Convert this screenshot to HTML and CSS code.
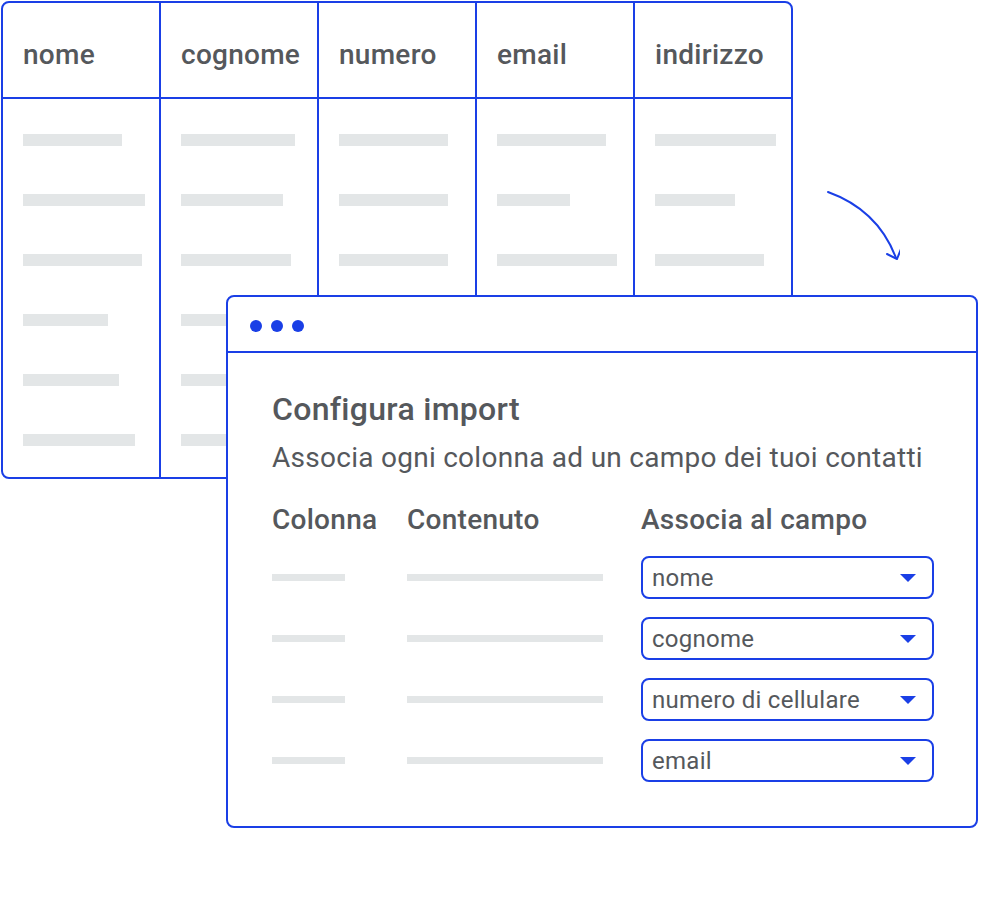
FILE: index.html
```html
<!DOCTYPE html>
<html lang="it">
<head>
<meta charset="utf-8">
<title>Configura import</title>
<link rel="stylesheet" href="styles.css">
</head>
<body>
<div class="canvas">
  <div class="sheet">
    <div class="col">
      <div class="col-head">nome</div>
      <div class="col-body">
        <span class="bar" style="width:99px"></span>
        <span class="bar" style="width:122px"></span>
        <span class="bar" style="width:119px"></span>
        <span class="bar" style="width:85px"></span>
        <span class="bar" style="width:96px"></span>
        <span class="bar" style="width:112px"></span>
      </div>
    </div>
    <div class="col">
      <div class="col-head">cognome</div>
      <div class="col-body">
        <span class="bar" style="width:114px"></span>
        <span class="bar" style="width:102px"></span>
        <span class="bar" style="width:110px"></span>
        <span class="bar" style="width:90px"></span>
        <span class="bar" style="width:100px"></span>
        <span class="bar" style="width:95px"></span>
      </div>
    </div>
    <div class="col">
      <div class="col-head">numero</div>
      <div class="col-body">
        <span class="bar" style="width:109px"></span>
        <span class="bar" style="width:109px"></span>
        <span class="bar" style="width:109px"></span>
        <span class="bar" style="width:90px"></span>
        <span class="bar" style="width:100px"></span>
        <span class="bar" style="width:95px"></span>
      </div>
    </div>
    <div class="col">
      <div class="col-head">email</div>
      <div class="col-body">
        <span class="bar" style="width:109px"></span>
        <span class="bar" style="width:73px"></span>
        <span class="bar" style="width:120px"></span>
        <span class="bar" style="width:90px"></span>
        <span class="bar" style="width:100px"></span>
        <span class="bar" style="width:95px"></span>
      </div>
    </div>
    <div class="col">
      <div class="col-head">indirizzo</div>
      <div class="col-body">
        <span class="bar" style="width:121px"></span>
        <span class="bar" style="width:80px"></span>
        <span class="bar" style="width:109px"></span>
        <span class="bar" style="width:90px"></span>
        <span class="bar" style="width:100px"></span>
        <span class="bar" style="width:95px"></span>
      </div>
    </div>
  </div>

  <svg class="arrow" width="100" height="90" viewBox="800 180 100 90" aria-hidden="true">
    <path d="M828 192 Q878 210 896 258" fill="none" stroke="#1a3fe6" stroke-width="2" stroke-linecap="round"/>
    <path d="M887 254 L897 259 L901 249" fill="none" stroke="#1a3fe6" stroke-width="2" stroke-linecap="round" stroke-linejoin="round"/>
  </svg>

  <div class="dialog">
    <div class="dialog-bar">
      <span class="dot"></span><span class="dot"></span><span class="dot"></span>
    </div>
    <div class="dialog-body">
      <h1 class="title">Configura import</h1>
      <p class="subtitle">Associa ogni colonna ad un campo dei tuoi contatti</p>
      <div class="map">
        <div class="map-head">Colonna</div>
        <div class="map-head">Contenuto</div>
        <div class="map-head">Associa al campo</div>

        <span class="mbar short"></span>
        <span class="mbar long"></span>
        <div class="select"><span>nome</span><span class="caret"></span></div>

        <span class="mbar short"></span>
        <span class="mbar long"></span>
        <div class="select"><span>cognome</span><span class="caret"></span></div>

        <span class="mbar short"></span>
        <span class="mbar long"></span>
        <div class="select"><span>numero di cellulare</span><span class="caret"></span></div>

        <span class="mbar short"></span>
        <span class="mbar long"></span>
        <div class="select"><span>email</span><span class="caret"></span></div>
      </div>
    </div>
  </div>
</div>
</body>
</html>
```

FILE: styles.css
```css
* { box-sizing: border-box; }

html, body {
  margin: 0;
  padding: 0;
  background: #ffffff;
}

body {
  font-family: Roboto, "Liberation Sans", Arial, sans-serif;
  color: #55585c;
  letter-spacing: 0.27px;
}

.canvas {
  position: relative;
  width: 981px;
  height: 901px;
  overflow: hidden;
}

/* Background spreadsheet */
.sheet {
  margin: 1px 0 0 1px;
  width: 792px;
  height: 478px;
  border: 2px solid #1a3fe6;
  border-radius: 8px;
  display: flex;
  overflow: hidden;
}

.col {
  width: 158px;
  border-right: 2px solid #1a3fe6;
  display: flex;
  flex-direction: column;
}

.col:last-child {
  width: 156px;
  border-right: 0;
}

.col-head {
  height: 96px;
  padding: 9px 0 0 20px;
  line-height: 85px;
  font-size: 28px;
  font-weight: 500;
  border-bottom: 2px solid #1a3fe6;
}

.col-body {
  padding: 35px 0 0 20px;
  display: flex;
  flex-direction: column;
  gap: 48px;
}

.bar {
  display: block;
  height: 12px;
  background: #e3e6e7;
}

.arrow {
  position: absolute;
  left: 800px;
  top: 180px;
}

/* Dialog */
.dialog {
  position: absolute;
  left: 226px;
  top: 295px;
  width: 752px;
  height: 533px;
  background: #ffffff;
  border: 2px solid #1a3fe6;
  border-radius: 8px;
}

.dialog-bar {
  height: 56px;
  border-bottom: 2px solid #1a3fe6;
  display: flex;
  align-items: center;
  gap: 9px;
  padding: 4px 0 0 22px;
}

.dot {
  width: 12px;
  height: 12px;
  border-radius: 50%;
  background: #1a3fe6;
}

.dialog-body {
  padding: 36px 0 0 44px;
}

.title {
  margin: 0;
  font-size: 32px;
  line-height: 40px;
  font-weight: 500;
  letter-spacing: 0.3px;
}

.subtitle {
  margin: 11px 0 0 0;
  font-size: 28px;
  line-height: 36px;
  font-weight: 400;
}

.map {
  margin-top: 26px;
  display: grid;
  grid-template-columns: 135px 234px 293px;
  grid-template-rows: 36px repeat(4, 43px);
  row-gap: 18px;
  align-items: center;
}

.map-head {
  font-size: 28px;
  line-height: 36px;
  font-weight: 500;
}

.mbar {
  display: block;
  height: 7px;
  background: #e3e6e7;
}

.mbar.short { width: 73px; }
.mbar.long { width: 196px; }

.select {
  height: 43px;
  border: 2px solid #1a3fe6;
  border-radius: 8px;
  display: flex;
  align-items: center;
  justify-content: space-between;
  padding: 0 16px 0 9px;
  font-size: 24px;
}

.caret {
  width: 0;
  height: 0;
  border-left: 8px solid transparent;
  border-right: 8px solid transparent;
  border-top: 8px solid #1a3fe6;
}
```
